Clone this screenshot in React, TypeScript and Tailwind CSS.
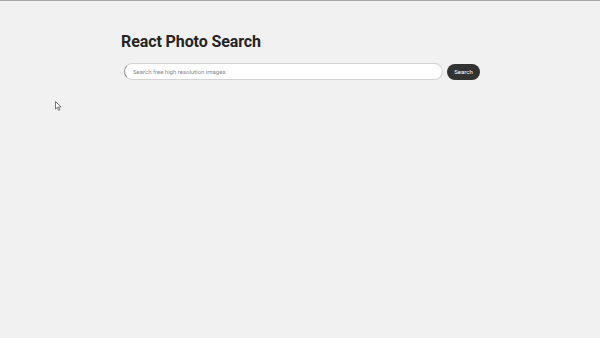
import React, { useState } from 'react';

const App: React.FC = () => {
  const [query, setQuery] = useState('');

  return (
    <div className="min-h-[338px] w-full bg-[#f2f1f2] border-t border-[#a7a3a8] relative" style={{ fontFamily: 'Roboto, sans-serif' }}>
      <div className="pl-[121px] pt-[33px]">
        <h1 className="text-[16px] font-bold text-[#242424] leading-[16px] tracking-[-0.1px]">React Photo Search</h1>
        <form className="flex items-center gap-[4px] mt-[13px] ml-[3px]" onSubmit={e => e.preventDefault()}>
          <input
            type="text"
            value={query}
            onChange={e => setQuery(e.target.value)}
            placeholder="Search free high resolution images"
            className="w-[319px] h-[17px] rounded-full bg-white border border-[#d4d2d4] border-l-[#8f8c8f] pl-[8px] text-[6px] text-[#333] placeholder:text-[#8a888a] outline-none"
          />
          <button type="submit" className="w-[33px] h-[16px] rounded-full bg-[#333232] text-white text-[6px] leading-none">
            Search
          </button>
        </form>
      </div>
      <svg className="absolute left-[55px] top-[100px]" width="7" height="10" viewBox="0 0 7 10">
        <path d="M0.5 0.5 L0.5 8 L2.3 6.3 L3.6 9.3 L4.8 8.8 L3.6 5.9 L6 5.9 Z" fill="#fff" stroke="#555" strokeWidth="0.8" strokeLinejoin="round" />
      </svg>
    </div>
  );
};

export default App;
